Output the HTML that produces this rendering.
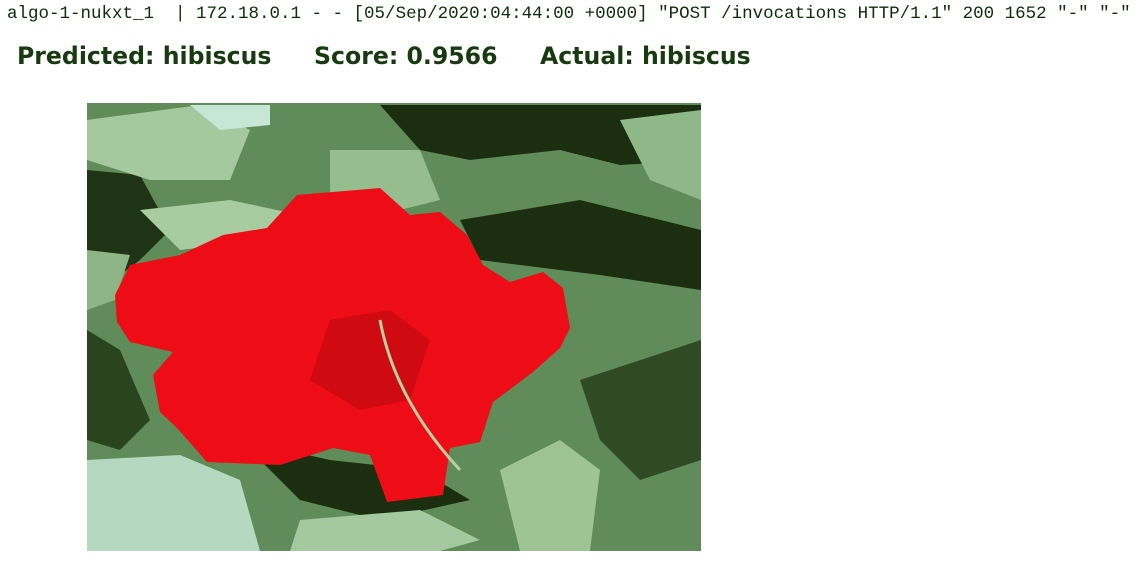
<!DOCTYPE html>
<html><head><meta charset="utf-8"><style>
body{margin:0;background:#fff;width:1145px;height:561px;overflow:hidden;position:relative}
.log{position:absolute;left:7px;top:2px;font-family:"Liberation Mono",monospace;font-size:17.5px;color:#0f2a0f;white-space:pre;line-height:24px}
.h{position:absolute;top:42px;font-family:"DejaVu Sans","Liberation Sans",sans-serif;font-weight:bold;font-size:23.6px;color:#173a10;white-space:pre}
svg{position:absolute;left:87px;top:103px}
</style></head><body>
<div class="log">algo-1-nukxt_1  | 172.18.0.1 - - [05/Sep/2020:04:44:00 +0000] "POST /invocations HTTP/1.1" 200 1652 "-" "-"</div>
<div class="h" style="left:17px">Predicted: hibiscus</div>
<div class="h" style="left:314px">Score: 0.9566</div>
<div class="h" style="left:540px">Actual: hibiscus</div>
<svg width="614" height="448" viewBox="87 103 614 448">
<rect x="87" y="103" width="614" height="448" fill="#5f8c58"/>
<path d="M380 105 L701 105 L701 160 L620 165 L560 150 L470 160 L420 150 Z" fill="#1b2e10"/>
<path d="M460 220 L580 200 L701 230 L701 290 L600 275 L560 270 L480 260 Z" fill="#1b2e10"/>
<path d="M87 170 L140 175 L170 230 L140 260 L87 300 Z" fill="#1f3414"/>
<path d="M87 330 L120 350 L150 420 L120 450 L87 440 Z" fill="#2a4420"/>
<path d="M240 440 L330 460 L420 470 L470 500 L380 520 L300 500 Z" fill="#1b2e10"/>
<path d="M580 380 L701 340 L701 460 L640 480 L600 440 Z" fill="#2f4a24"/>
<path d="M87 120 L200 105 L250 130 L230 180 L150 180 L87 160 Z" fill="#a6c89e"/>
<path d="M190 105 L270 105 L270 125 L220 130 Z" fill="#c8e6d4"/>
<path d="M87 460 L180 455 L240 480 L260 551 L87 551 Z" fill="#b4d8c0"/>
<path d="M330 150 L420 150 L440 200 L380 215 L330 200 Z" fill="#96bd8e"/>
<path d="M140 210 L230 200 L300 215 L260 240 L180 250 Z" fill="#a8cc9f"/>
<path d="M500 470 L560 440 L600 470 L590 551 L520 551 Z" fill="#9fc494"/>
<path d="M300 520 L420 510 L480 540 L440 551 L290 551 Z" fill="#a4c8a0"/>
<path d="M620 120 L701 110 L701 200 L650 180 Z" fill="#8fb888"/>
<path d="M87 250 L130 255 L115 300 L87 310 Z" fill="#8db586"/>
<path d="M115 295 L130 265 L180 255 L223 235 L267 228 L297 195 L333 192 L380 188 L410 215 L440 212 L467 235 L483 265 L510 282 L543 272 L563 288 L570 328 L560 348 L533 372 L493 402 L480 442 L450 448 L443 495 L387 502 L370 455 L333 448 L280 465 L207 462 L177 428 L160 412 L153 375 L173 352 L130 342 L117 322 Z" fill="#ee0c16"/>
<path d="M330 320 L390 310 L430 340 L410 400 L360 410 L310 380 Z" fill="#c20a10" opacity=".7"/>
<path d="M380 320 Q395 400 460 470" stroke="#b8d0a0" stroke-width="3" fill="none"/>
</svg>
</body></html>
